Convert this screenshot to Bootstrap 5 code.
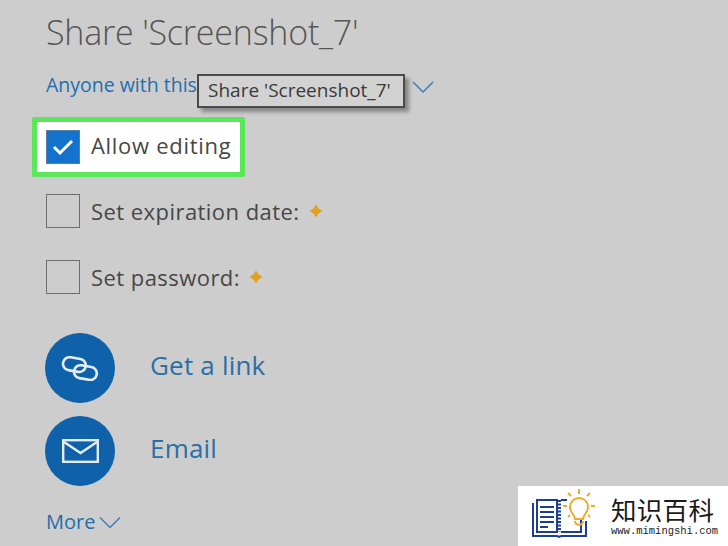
<!DOCTYPE html>
<html lang="en">
<head>
    <meta charset="UTF-8">
    <meta name="viewport" content="width=device-width, initial-scale=1.0">
    <title>Share</title>
    <link href="https://cdn.jsdelivr.net/npm/bootstrap@5.3.0/dist/css/bootstrap.min.css" rel="stylesheet">
    <style>
        html, body { height: 100%; }
        body {
            background: #cdcdcd;
            font-family: "Open Sans", "Noto Sans", sans-serif;
            color: #3c3c3c;
            overflow: hidden;
        }
        .share-page { position: relative; width: 728px; height: 546px; padding: 10px 0 0 46px; overflow: hidden; }
        .share-title { font-size: 34px; font-weight: 300; line-height: 44px; margin: 0; color: #555; letter-spacing: -.2px; }
        .anyone-row { height: 24px; margin-top: 20px; color: #1f6fb0; font-size: 19.5px; line-height: 22px; }
        .anyone-row svg { position: absolute; left: 412px; top: 80px; }
        .tip-box {
            position: absolute; left: 197px; top: 74px; width: 208px; height: 34px;
            background: #d2d2d2; border: 2px solid #4a4a4a; box-shadow: 4px 4px 4px rgba(0,0,0,.35);
            font-size: 19px; line-height: 29px; padding-left: 9px; white-space: nowrap; color: #3a3a3a;
        }
        .edit-box {
            width: 213px; height: 60px; margin: 19px 0 0 -14px; padding-left: 9px;
            background: #fff; border: 5px solid #5ce65c; border-radius: 2px;
        }
        .check-square { width: 34px; height: 34px; border: 1.5px solid #6e6e6e; flex: none; }
        .check-square.is-on { background: #1272cc; border-color: #5a7fa5; }
        .opt-label { font-size: 22px; letter-spacing: .45px; line-height: 34px; margin-left: 11px; white-space: nowrap; color: #474747; }
        .edit-box .opt-label { letter-spacing: .7px; margin-bottom: 4px; }
        .opt-row { height: 34px; margin-top: 32px; }
        .opt-row.first-opt { margin-top: 17px; }
        .star-icon { margin-left: 9px; }
        .share-action { height: 70px; margin-top: 13px; margin-left: -1px; }
        .share-action.first-act { margin-top: 39px; }
        .act-circle { width: 70px; height: 70px; border-radius: 50%; background: #0f62a9; flex: none; }
        .act-label { font-size: 26px; letter-spacing: .2px; margin-left: 35px; margin-bottom: 6px; color: #2a6fa5; line-height: 36px; }
        .more-row { margin-top: 23px; font-size: 20px; line-height: 26px; color: #1f6fa8; }
        .logo-box {
            position: absolute; right: 0; bottom: 0; width: 210px; height: 60px; background: #fff;
            padding: 2px 0 0 13px;
        }
        .logo-text { margin-left: 14px; padding-top: 5px; }
        .logo-cn { font-family: "Noto Sans CJK SC", sans-serif; font-size: 25.5px; line-height: 31px; color: #1a1a1a; letter-spacing: .3px; }
        .logo-url { font-family: "Liberation Mono", monospace; font-size: 10.5px; line-height: 12px; color: #222; margin-top: 1px; }
    </style>
</head>
<body>
    <div class="share-page">
        <h1 class="share-title">Share 'Screenshot_7'</h1>
        <div class="anyone-row">Anyone with this link
            <svg width="22" height="14" viewBox="0 0 22 14" fill="none" stroke="#3f7fb5" stroke-width="1.5"><path d="M1 2l10 10L21 2"/></svg>
        </div>
        <div class="tip-box">Share 'Screenshot_7'</div>

        <div class="edit-box d-flex align-items-center">
            <span class="check-square is-on d-flex align-items-center justify-content-center">
                <svg width="22" height="18" viewBox="0 0 22 18" fill="none" stroke="#fff" stroke-width="3"><path d="M2 9l6 6L20 3"/></svg>
            </span>
            <span class="opt-label">Allow editing</span>
        </div>

        <div class="opt-row first-opt d-flex align-items-center">
            <span class="check-square"></span>
            <span class="opt-label">Set expiration date:</span>
            <svg class="star-icon" width="14" height="14" viewBox="0 0 14 14" fill="#e0a020"><path d="M7 .5l2.500 4 4 2.500-4 2.500-2.500 4-2.500-4-4-2.500 4-2.500z"/></svg>
        </div>
        <div class="opt-row d-flex align-items-center">
            <span class="check-square"></span>
            <span class="opt-label">Set password:</span>
            <svg class="star-icon" width="14" height="14" viewBox="0 0 14 14" fill="#e0a020"><path d="M7 .5l2.500 4 4 2.500-4 2.500-2.500 4-2.500-4-4-2.500 4-2.500z"/></svg>
        </div>

        <div class="share-action first-act d-flex align-items-center">
            <span class="act-circle d-flex align-items-center justify-content-center">
                <svg width="38" height="25" viewBox="0 0 38 25" fill="none" stroke="#e4edf5" stroke-width="2.6">
                    <rect x="2" y="2" width="23" height="13" rx="6.5" transform="rotate(10 13 8)"/>
                    <rect x="13" y="10" width="23" height="13" rx="6.5" transform="rotate(10 24 16)"/>
                </svg>
            </span>
            <span class="act-label">Get a link</span>
        </div>
        <div class="share-action d-flex align-items-center">
            <span class="act-circle d-flex align-items-center justify-content-center">
                <svg width="37" height="24" viewBox="0 0 37 24" fill="none" stroke="#e4edf5" stroke-width="2.4">
                    <rect x="1.2" y="1.2" width="34.600" height="21.600"/>
                    <path d="M2 3l16.500 11L35 3"/>
                </svg>
            </span>
            <span class="act-label">Email</span>
        </div>
        <div class="more-row d-flex align-items-center">More
            <svg class="ms-1" width="22" height="13" viewBox="0 0 22 13" fill="none" stroke="#3f7fb5" stroke-width="1.500"><path d="M1 1.500l10 10 10-10"/></svg>
        </div>

        <div class="logo-box d-flex">
            <svg width="66" height="56" viewBox="0 0 66 56" fill="none">
                <g stroke="#1c3f94" stroke-width="2">
                    <path d="M2 15v33h24l2 1 2-1h25V33"/>
                    <path d="M6 12h20v32H6z"/>
                    <path d="M30 12h6M30 44h20V32"/>
                    <path d="M28 12v32" stroke-dasharray="2 1.500" stroke-width="4"/>
                    <path d="M9 19h14M9 24h14M9 29h14M9 34h14M9 39h8"/>
                </g>
                <g stroke="#f0a92a" stroke-width="2">
                    <path d="M44 31c0-4-5-6-5-12a9 9 0 0 1 18 0c0 6-5 8-5 12z"/>
                    <path d="M44 33c0 5 8 5 8 0"/>
                    <path d="M48 1v5M37 5l3 3M59 5l-3 3M32 18h4M60 18h4M37 29l2-2M59 29l-2-2"/>
                </g>
            </svg>
            <div class="logo-text">
                <div class="logo-cn">知识百科</div>
                <div class="logo-url">www.mimingshi.com</div>
            </div>
        </div>
    </div>
    <script src="https://cdn.jsdelivr.net/npm/bootstrap@5.3.0/dist/js/bootstrap.bundle.min.js"></script>
</body>
</html>
